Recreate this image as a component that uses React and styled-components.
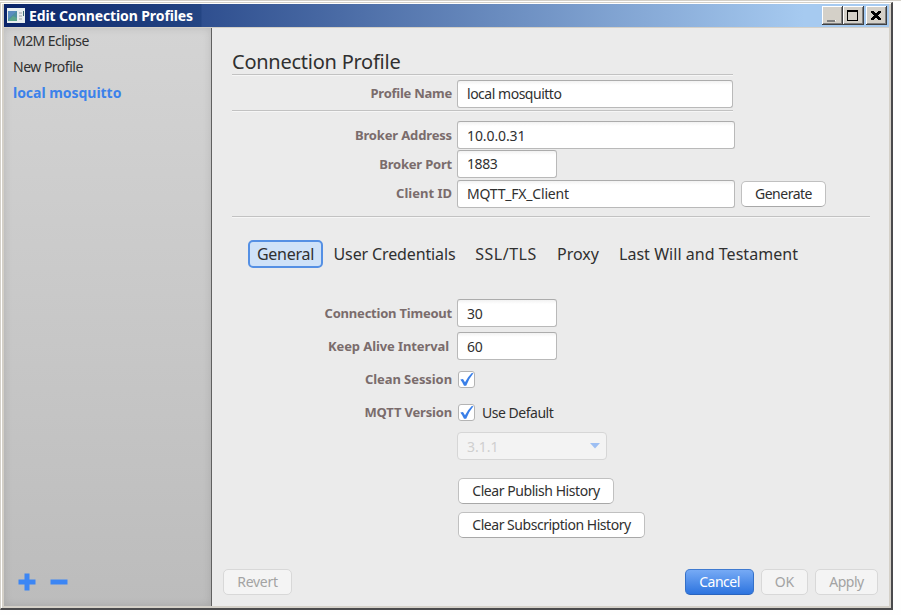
import React from 'react';
import styled, { createGlobalStyle, css } from 'styled-components';

const Global = createGlobalStyle`
  * { box-sizing: border-box; }
  body { margin: 0; background: #fefefe; overflow: hidden; }
  #root { font-family: "Noto Sans", sans-serif; font-size: 14px; color: #303030; }
  button, input { font: inherit; color: inherit; letter-spacing: inherit; }
`;

const Desktop = styled.div`
  width: 901px;
  height: 615px;
  padding-top: 2px;
  background: linear-gradient(#d4d0c8 0 1px, #fefefe 1px);
`;
const Win = styled.div`
  width: 893px;
  height: 608px;
  display: flex;
  flex-direction: column;
  padding: 1px 2px 2px 3px;
  background: #d4d0c8;
  border-style: solid;
  border-width: 1px 2px 2px 1px;
  border-color: #d4d0c8 #4a4a4c #4a4a4c #d4d0c8;
  box-shadow: inset 1px 1px #fff;
`;
const TitleBar = styled.header`
  height: 23px;
  flex: none;
  display: flex;
  align-items: center;
  padding: 0 2px 0 3px;
  background: linear-gradient(90deg, #0a246a 0, #244583 197px, #2f4f8f 198px, #a6caf0 800px);
`;
const Title = styled.h1`
  flex: 1;
  margin: 0 0 0 4px;
  font-size: 14px;
  line-height: 22px;
  font-weight: 700;
  color: #fff;
  letter-spacing: -0.1px;
`;
const WinButton = styled.button`
  width: 21px;
  height: 19px;
  padding: 0;
  margin-left: ${(p) => p.$gap || 0}px;
  border: 0;
  background: #d4d0c8;
  box-shadow: inset -1px -1px #404040, inset 1px 1px #fff, inset -2px -2px #808080;
  svg { display: block; }
`;
const Body = styled.div`
  flex: 1;
  display: flex;
  border-top: 1px solid #d4d0c8;
  min-height: 0;
`;
const Sidebar = styled.nav`
  width: 208px;
  display: flex;
  flex-direction: column;
  border-right: 1px solid #606060;
  background: linear-gradient(#d4d4d4, #bcbcbc);
  box-shadow: inset 0 0 8px rgba(0, 0, 0, 0.12);
`;
const Profile = styled.div`
  height: 26px;
  padding-left: 9px;
  line-height: 26px;
  letter-spacing: ${(p) => p.$ls}px;
  ${(p) => p.$active && css`font-weight: 700; color: #3c82ea;`}
`;
const SideTools = styled.div`
  margin-top: auto;
  display: flex;
  gap: 14px;
  padding: 0 0 15px 14px;
`;
const Main = styled.main`
  flex: 1;
  display: flex;
  flex-direction: column;
  background: #ebebeb;
  padding: 20px 11px 0 11px;
`;
const Heading = styled.h2`
  margin: 0 0 0 9px;
  height: 26px;
  line-height: 27px;
  font-size: 20px;
  font-weight: 400;
  letter-spacing: ${(p) => p.$ls}px;
`;
const Rule = styled.hr`
  width: ${(p) => p.$w}px;
  height: 2px;
  margin: 0 0 0 9px;
  border: 0;
  border-top: 1px solid #c2c2c2;
  background: #f6f6f6;
`;
const RuleRow = styled.div`
  height: ${(p) => p.$h}px;
  padding-top: ${(p) => p.$top}px;
`;
const Row = styled.div`
  display: flex;
  align-items: center;
  height: 28px;
  margin-top: ${(p) => p.$mt || 0}px;
`;
const Label = styled.label`
  width: 229px;
  margin-right: ${(p) => 5 + (p.$shift || 0)}px;
  margin-left: ${(p) => -(p.$shift || 0)}px;
  padding-bottom: ${(p) => p.$lift || 0}px;
  flex: none;
  text-align: right;
  white-space: nowrap;
  font-size: 13px;
  line-height: 20px;
  font-weight: 700;
  color: #7a6c6c;
  letter-spacing: ${(p) => p.$ls || 0}px;
`;
const Field = styled.input`
  width: ${(p) => p.$w}px;
  height: 28px;
  padding: 0 9px ${(p) => p.$lift || 0}px;
  border: 1px solid #b9b9b9;
  border-top-color: #acacac;
  border-radius: 3px;
  background: linear-gradient(#f2f2f2, #fff 4px);
  letter-spacing: ${(p) => p.$ls || 0}px;
  outline: 0;
`;
const Button = styled.button`
  width: ${(p) => p.$w}px;
  height: 26px;
  padding: 0;
  margin-left: ${(p) => p.$gap || 0}px;
  flex: none;
  white-space: nowrap;
  line-height: 22px;
  border: 1px solid #c0c0c0;
  border-bottom-color: #a8a8a8;
  border-radius: 5px;
  background: #fff;
  letter-spacing: ${(p) => p.$ls || 0}px;
  ${(p) => p.disabled && css`color: #a3a3a3; background: #f4f4f4; border-color: #d8d8d8;`}
  ${(p) => p.$primary && css`
    color: #fff;
    border-color: #3f7ad0 #3470c8 #2a64bd;
    background: linear-gradient(#76aaf5, #2d74df);
  `}
`;
const Tabs = styled.div`
  display: flex;
  height: 28px;
  margin: 22px 0 0 25px;
  font-size: 16px;
`;
const Tab = styled.div`
  width: ${(p) => p.$w}px;
  line-height: 26px;
  flex: none;
  white-space: nowrap;
  text-align: center;
  border: 1px solid transparent;
  letter-spacing: ${(p) => p.$ls || 0}px;
  ${(p) => p.$active && css`
    background: #cfe2f8;
    border: 2px solid #5590e4;
    border-radius: 5px;
    line-height: 24px;
  `}
`;
const Check = styled.span`
  width: 17px;
  height: 17px;
  margin: 0 7px 0 1px;
  border: 1px solid #b4b4b4;
  border-radius: 3px;
  background: #fff;
  svg { display: block; }
`;
const Text = styled.span`
  letter-spacing: ${(p) => p.$ls}px;
`;
const Combo = styled.div`
  width: 150px;
  height: 28px;
  margin-left: 234px;
  padding: 0 6px 0 9px;
  display: flex;
  align-items: center;
  justify-content: space-between;
  border: 1px solid #d6d6d6;
  border-radius: 4px;
  background: #f3f3f3;
  color: #cfcfcf;
`;
const Indent = styled.div`
  display: flex;
  flex-direction: column;
  align-items: flex-start;
  gap: 8px;
  margin: 18px 0 0 235px;
`;
const Footer = styled.footer`
  display: flex;
  gap: 7px;
  margin-top: 31px;
  & > :nth-child(2) { margin-left: auto; }
`;

const Tick = () => (
  <Check>
    <svg width="15" height="15" viewBox="0 0 15 15">
      <path d="M1.3 7.4 L4 7 L6 10.2 Q9 4.6 12.8 1 L14.4 1.2 Q9.8 6.6 7.2 13.8 L5 13.8 Q3.5 10 1.3 7.4Z" fill="#3a7fe8" />
    </svg>
  </Check>
);

export default function App() {
  return (
    <Desktop>
      <Global />
      <Win>
        <TitleBar>
          <svg width="18" height="16" viewBox="0 0 18 16">
            <rect width="18" height="15" fill="#e8eef0" />
            <rect x="1" y="3" width="9" height="10" fill="#4f8fa0" />
            <path d="M1 3h9L1 11z" fill="#5b8dc0" />
            <path d="M2 12l4-4 4 2v3H2z" fill="#5da58a" />
            <path d="M12 4h3v2h-3zM12 7h3v2h-3zM12 10h3v2h-3z" fill="#c3c7ca" />
            <path d="M16 3h1v5h-1z" fill="#3d6a74" />
          </svg>
          <Title>Edit Connection Profiles</Title>
          <WinButton>
            <svg width="21" height="19"><path d="M5 14h8v2H5z" fill="#808080" /><path d="M6 16h8v-1h-1v-1h1v2H6z" fill="#fff" /></svg>
          </WinButton>
          <WinButton>
            <svg width="21" height="19"><path d="M4 4h11v11H4z M5 6v8h9V6z" fillRule="evenodd" fill="#000" /></svg>
          </WinButton>
          <WinButton $gap={2}>
            <svg width="21" height="19" shapeRendering="crispEdges"><path d="M5 5h3l2 2.5L12 5h3v1l-3.4 3.5L15 13v1h-3l-2-2.5L8 14H5v-1l3.4-3.5L5 6z" fill="#000" /></svg>
          </WinButton>
        </TitleBar>
        <Body>
          <Sidebar>
            <Profile $ls={-0.57}>M2M Eclipse</Profile>
            <Profile $ls={-0.5}>New Profile</Profile>
            <Profile $ls={-0.03} $active>local mosquitto</Profile>
            <SideTools>
              <svg width="18" height="18"><path d="M6.5 0.5h5v6h6v5h-6v6h-5v-6h-6v-5h6z" fill="#3c86f4" /></svg>
              <svg width="18" height="18"><path d="M0.5 6.5h17v5h-17z" fill="#3c86f4" /></svg>
            </SideTools>
          </Sidebar>
          <Main>
            <Heading $ls={-0.25}>Connection Profile</Heading>
            <Rule $w={501} />
            <Row $mt={4}>
              <Label $ls={-0.25} $lift={2}>Profile Name</Label>
              <Field $w={276} $ls={-0.48} $lift={2} defaultValue="local mosquitto" />
            </Row>
            <RuleRow $h={13} $top={2}><Rule $w={501} /></RuleRow>
            <Row>
              <Label $ls={-0.15}>Broker Address</Label>
              <Field $w={278} $ls={-0.1} defaultValue="10.0.0.31" />
            </Row>
            <Row $mt={1}>
              <Label $ls={-0.2}>Broker Port</Label>
              <Field $w={100} $ls={-0.4} $lift={2} defaultValue="1883" />
            </Row>
            <Row $mt={2}>
              <Label $lift={2}>Client ID</Label>
              <Field $w={278} $ls={-0.2} $lift={2} defaultValue="MQTT_FX_Client" />
              <Button $w={85} $gap={6} $ls={-0.5}>Generate</Button>
            </Row>
            <RuleRow $h={10} $top={8}><Rule $w={638} /></RuleRow>
            <Tabs>
              <Tab $w={75} $ls={-0.25} $active>General</Tab>
              <Tab $w={143} $ls={-0.13}>User Credentials</Tab>
              <Tab $w={80} $ls={0.5}>SSL/TLS</Tab>
              <Tab $w={64}>Proxy</Tab>
              <Tab $w={197} $ls={0.04}>Last Will and Testament</Tab>
            </Tabs>
            <Row $mt={31}>
              <Label $ls={-0.22}>Connection Timeout</Label>
              <Field $w={100} $ls={-0.3} defaultValue="30" />
            </Row>
            <Row $mt={5}>
              <Label $shift={3} $ls={-0.1}>Keep Alive Interval</Label>
              <Field $w={100} $ls={-0.3} defaultValue="60" />
            </Row>
            <Row $mt={5}>
              <Label $ls={-0.08}>Clean Session</Label>
              <Tick />
            </Row>
            <Row $mt={5}>
              <Label $ls={-0.17}>MQTT Version</Label>
              <Tick />
              <Text $ls={-0.48}>Use Default</Text>
            </Row>
            <Row $mt={6}>
              <Combo>
                3.1.1
                <svg width="10" height="6"><path d="M0 0h10L5 5.5z" fill="#9dbff3" /></svg>
              </Combo>
            </Row>
            <Indent>
              <Button $w={156} $ls={-0.44}>Clear Publish History</Button>
              <Button $w={187} $ls={-0.47}>Clear Subscription History</Button>
            </Indent>
            <Footer>
              <Button $w={69} $ls={-0.3} disabled>Revert</Button>
              <Button $w={69} $ls={-0.5} $primary>Cancel</Button>
              <Button $w={47} disabled>OK</Button>
              <Button $w={63} $ls={-0.5} disabled>Apply</Button>
            </Footer>
          </Main>
        </Body>
      </Win>
    </Desktop>
  );
}
